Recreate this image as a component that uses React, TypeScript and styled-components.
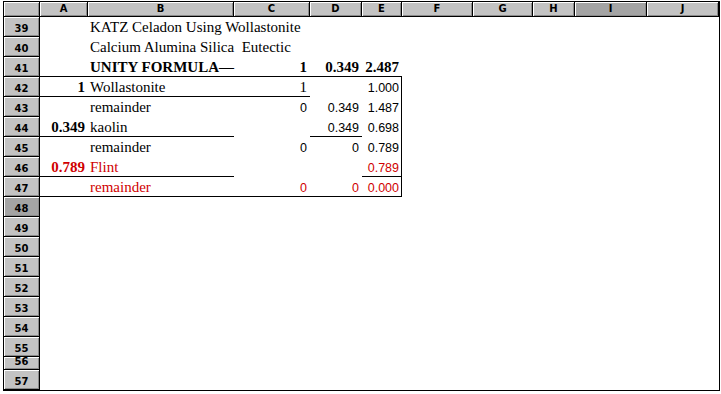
import styled, { createGlobalStyle, css } from "styled-components";

type Kind = "serif" | "bold" | "num";

interface CellData {
  text?: string;
  kind?: Kind;
  right?: boolean;
  red?: boolean;
  under?: boolean;
  edge?: boolean;
}

const COLUMNS = [
  { name: "A", width: 48 },
  { name: "B", width: 146 },
  { name: "C", width: 76 },
  { name: "D", width: 52 },
  { name: "E", width: 40 },
  { name: "F", width: 71 },
  { name: "G", width: 60 },
  { name: "H", width: 42 },
  { name: "I", width: 72 },
  { name: "J", width: 72 },
];

const SELECTED_COLUMN = "I";
const SELECTED_ROW = 48;

const ROWS: { num: number; height: number; cells: Record<string, CellData> }[] = [
  { num: 39, height: 20, cells: { B: { text: "KATZ Celadon Using Wollastonite" } } },
  { num: 40, height: 20, cells: { B: { text: "Calcium Alumina Silica  Eutectic" } } },
  {
    num: 41,
    height: 20,
    cells: {
      A: { under: true },
      B: { text: "UNITY FORMULA—", kind: "bold", under: true },
      C: { text: "1", kind: "bold", right: true, under: true },
      D: { text: "0.349", kind: "bold", right: true, under: true },
      E: { text: "2.487", kind: "bold", right: true, under: true },
    },
  },
  {
    num: 42,
    height: 20,
    cells: {
      A: { text: "1", kind: "bold", right: true, under: true },
      B: { text: "Wollastonite", under: true },
      C: { text: "1", right: true, under: true },
      E: { text: "1.000", kind: "num", right: true, edge: true },
    },
  },
  {
    num: 43,
    height: 20,
    cells: {
      B: { text: "remainder" },
      C: { text: "0", kind: "num", right: true },
      D: { text: "0.349", kind: "num", right: true },
      E: { text: "1.487", kind: "num", right: true, edge: true },
    },
  },
  {
    num: 44,
    height: 20,
    cells: {
      A: { text: "0.349", kind: "bold", right: true, under: true },
      B: { text: "kaolin", under: true },
      D: { text: "0.349", kind: "num", right: true, under: true },
      E: { text: "0.698", kind: "num", right: true, edge: true },
    },
  },
  {
    num: 45,
    height: 20,
    cells: {
      B: { text: "remainder" },
      C: { text: "0", kind: "num", right: true },
      D: { text: "0", kind: "num", right: true },
      E: { text: "0.789", kind: "num", right: true, edge: true },
    },
  },
  {
    num: 46,
    height: 20,
    cells: {
      A: { text: "0.789", kind: "bold", right: true, red: true, under: true },
      B: { text: "Flint", red: true, under: true },
      E: { text: "0.789", kind: "num", right: true, red: true, under: true, edge: true },
    },
  },
  {
    num: 47,
    height: 20,
    cells: {
      A: { under: true },
      B: { text: "remainder", red: true, under: true },
      C: { text: "0", kind: "num", right: true, red: true, under: true },
      D: { text: "0", kind: "num", right: true, red: true, under: true },
      E: { text: "0.000", kind: "num", right: true, red: true, under: true, edge: true },
    },
  },
  ...[48, 49, 50, 51, 52, 53, 54, 55, 56, 57].map((num) => ({
    num,
    height: num === 56 ? 13 : 20,
    cells: {},
  })),
];

const GlobalStyle = createGlobalStyle`
  body {
    margin: 0;
    background: #fff;
  }
`;

const Sheet = styled.div<{ $cols: string; $rows: string }>`
  display: grid;
  grid-template-columns: ${(p) => p.$cols};
  grid-template-rows: ${(p) => p.$rows};
  width: fit-content;
  margin: 1px 0 0 3px;
  border: 1px solid #000;
  background: #fff;
`;

const HeaderCell = styled.div<{ $selected?: boolean; $row?: boolean }>`
  box-sizing: border-box;
  display: flex;
  justify-content: center;
  align-items: ${(p) => (p.$row ? "flex-end" : "center")};
  padding-bottom: ${(p) => (p.$row ? "2px" : "0")};
  background: ${(p) => (p.$selected ? "#a4a4a4" : "#c3c3c3")};
  border-right: 1px solid #000;
  border-bottom: 1px solid #000;
  box-shadow: inset 1px 1px 0 #fff, inset -1px -1px 0 #8a8a8a;
  font-family: "DejaVu Sans", sans-serif;
  font-weight: bold;
  font-size: 10px;
  line-height: 10px;
  color: #000;
  overflow: hidden;
`;

const kindStyles = {
  serif: css`
    font-family: "Liberation Serif", serif;
    font-size: 15px;
    padding-bottom: 2px;
  `,
  bold: css`
    font-family: "Liberation Serif", serif;
    font-size: 15px;
    font-weight: bold;
    padding-bottom: 2px;
  `,
  num: css`
    font-family: "Liberation Sans", sans-serif;
    font-size: 12.5px;
    padding-bottom: 3px;
  `,
};

const Cell = styled.div<{
  $kind: Kind;
  $right?: boolean;
  $red?: boolean;
  $under?: boolean;
  $edge?: boolean;
}>`
  box-sizing: border-box;
  display: flex;
  align-items: flex-end;
  justify-content: ${(p) => (p.$right ? "flex-end" : "flex-start")};
  padding-left: 2px;
  padding-right: 3px;
  line-height: 1;
  white-space: pre;
  color: ${(p) => (p.$red ? "#d00000" : "#000")};
  box-shadow: ${(p) => {
    const lines = [];
    if (p.$under) lines.push("inset 0 -1px 0 #000");
    if (p.$edge) lines.push("inset -1px 0 0 #000");
    return lines.length ? lines.join(", ") : "none";
  }};
  ${(p) => kindStyles[p.$kind]}
`;

export default function App() {
  const cols = ["36px", ...COLUMNS.map((c) => `${c.width}px`)].join(" ");
  const rows = ["15px", ...ROWS.map((r) => `${r.height}px`)].join(" ");

  return (
    <>
      <GlobalStyle />
      <Sheet $cols={cols} $rows={rows}>
        <HeaderCell />
        {COLUMNS.map((c) => (
          <HeaderCell key={c.name} $selected={c.name === SELECTED_COLUMN}>
            {c.name}
          </HeaderCell>
        ))}
        {ROWS.map((row) => (
          <Row key={row.num} num={row.num} cells={row.cells} />
        ))}
      </Sheet>
    </>
  );
}

function Row({ num, cells }: { num: number; cells: Record<string, CellData> }) {
  return (
    <>
      <HeaderCell $row $selected={num === SELECTED_ROW}>
        {num}
      </HeaderCell>
      {COLUMNS.map((c) => {
        const cell = cells[c.name] || {};
        return (
          <Cell
            key={c.name}
            $kind={cell.kind || "serif"}
            $right={cell.right}
            $red={cell.red}
            $under={cell.under}
            $edge={cell.edge}
          >
            {cell.text}
          </Cell>
        );
      })}
    </>
  );
}
